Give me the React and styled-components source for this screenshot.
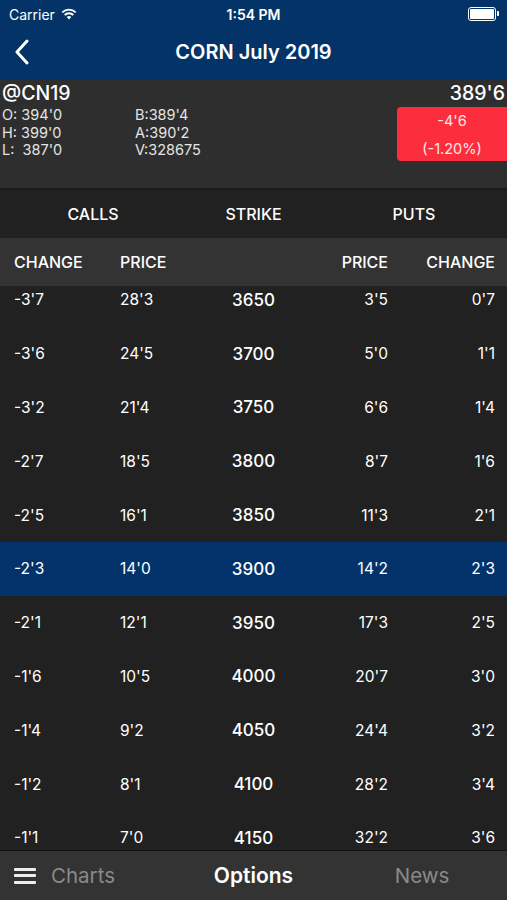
import styled, { createGlobalStyle } from 'styled-components';

const GlobalStyle = createGlobalStyle`
  html, body {
    margin: 0;
    padding: 0;
    background: #212121;
  }
  body {
    font-family: Inter, "Liberation Sans", sans-serif;
    color: #fff;
  }
`;

const rows = [
  ['-3\'7', '28\'3', '3650', '3\'5', '0\'7'],
  ['-3\'6', '24\'5', '3700', '5\'0', '1\'1'],
  ['-3\'2', '21\'4', '3750', '6\'6', '1\'4'],
  ['-2\'7', '18\'5', '3800', '8\'7', '1\'6'],
  ['-2\'5', '16\'1', '3850', '11\'3', '2\'1'],
  ['-2\'3', '14\'0', '3900', '14\'2', '2\'3'],
  ['-2\'1', '12\'1', '3950', '17\'3', '2\'5'],
  ['-1\'6', '10\'5', '4000', '20\'7', '3\'0'],
  ['-1\'4', '9\'2', '4050', '24\'4', '3\'2'],
  ['-1\'2', '8\'1', '4100', '28\'2', '3\'4'],
  ['-1\'1', '7\'0', '4150', '32\'2', '3\'6'],
];

const Page = styled.div`
  width: 507px;
  height: 900px;
  display: flex;
  flex-direction: column;
  overflow: hidden;
  background: #212121;
`;

const TopBar = styled.div`
  background: #043467;
  height: 80px;
  display: flex;
  flex-direction: column;
`;

const StatusBar = styled.div`
  height: 28px;
  display: grid;
  grid-template-columns: 1fr auto 1fr;
  align-items: center;
  padding: 0 9px;
  font-size: 14px;
`;

const Carrier = styled.div`
  display: flex;
  align-items: center;
  gap: 6px;
`;

const Clock = styled.div`
  font-weight: 600;
`;

const Battery = styled.div`
  justify-self: end;
  width: 24px;
  height: 10px;
  border: 1.5px solid #fff;
  border-radius: 3px;
  padding: 1px;
  margin-right: 2px;
  position: relative;
  &::before {
    content: '';
    display: block;
    height: 100%;
    background: #fff;
    border-radius: 1px;
  }
  &::after {
    content: '';
    position: absolute;
    right: -4px;
    top: 3px;
    width: 2px;
    height: 5px;
    background: #fff;
    border-radius: 0 1px 1px 0;
  }
`;

const NavBar = styled.div`
  flex: 1;
  display: grid;
  grid-template-columns: 60px 1fr 60px;
  align-items: center;
  padding-bottom: 4px;
`;

const BackButton = styled.div`
  padding-left: 14px;
  display: flex;
  align-items: center;
`;

const Title = styled.div`
  text-align: center;
  font-size: 20px;
  font-weight: 600;
`;

const Quote = styled.div`
  background: #2e2e2e;
  height: 110px;
  padding: 2px 2px 0 2px;
  box-sizing: border-box;
  border-bottom: 2px solid #1a1a1a;
  display: flex;
  justify-content: space-between;
`;

const QuoteLeft = styled.div`
  display: flex;
  flex-direction: column;
`;

const Symbol = styled.div`
  font-size: 19.5px;
  font-weight: 500;
  line-height: 22px;
`;

const Stats = styled.div`
  display: grid;
  grid-template-columns: 133px auto;
  font-size: 14.5px;
  line-height: 17.5px;
  color: #e4e4e4;
  margin-top: 2px;
`;

const QuoteRight = styled.div`
  display: flex;
  flex-direction: column;
  align-items: flex-end;
  margin-right: -2px;
`;

const Last = styled.div`
  font-size: 19.5px;
  font-weight: 500;
  line-height: 22px;
  padding-right: 2px;
`;

const ChangeBox = styled.div`
  margin-top: 3px;
  width: 110px;
  height: 54px;
  background: #fc2d3d;
  border-radius: 4px 0 0 4px;
  display: flex;
  flex-direction: column;
  align-items: center;
  justify-content: space-between;
  padding: 5px 0 4px;
  box-sizing: border-box;
  font-size: 14.5px;
  color: #ffe6e8;
`;

const GroupHeader = styled.div`
  height: 48px;
  background: #212121;
  display: grid;
  grid-template-columns: 186px 135px 186px;
  align-items: center;
  text-align: center;
  font-size: 16px;
  font-weight: 500;
`;

const ColumnHeader = styled.div`
  height: 48px;
  background: #333333;
`;

const Grid = styled.div`
  display: grid;
  grid-template-columns: 106px 66px 135px 67px 107px;
  align-items: center;
  height: 100%;
  padding: 0 12px 0 14px;
  font-size: ${(p) => (p.$head ? '16px' : '15.5px')};
  font-weight: ${(p) => (p.$head ? 500 : 400)};
`;

const Cell = styled.div`
  white-space: nowrap;
  text-align: ${(p) => p.$align || 'left'};
  font-size: ${(p) => (p.$strike ? '17px' : 'inherit')};
  font-weight: ${(p) => (p.$strike ? 500 : 'inherit')};
`;

const List = styled.div`
  flex: 1;
  overflow: hidden;
  background: #212121;
`;

const Rows = styled.div`
  margin-top: -13px;
`;

const Row = styled.div`
  height: 53.8px;
  background: ${(p) => (p.$active ? '#04336b' : '#212121')};
`;

const TabBar = styled.div`
  height: 49px;
  background: #333333;
  border-top: 1.5px solid #111;
  display: grid;
  grid-template-columns: 186px 135px 186px;
  align-items: center;
`;

const Tab = styled.div`
  display: flex;
  align-items: center;
  justify-content: ${(p) => p.$justify || 'center'};
  gap: 15px;
  padding-left: ${(p) => p.$pad || '0'};
  font-size: ${(p) => (p.$active ? '21px' : '20.5px')};
  font-weight: ${(p) => (p.$active ? 600 : 400)};
  color: ${(p) => (p.$active ? '#fff' : '#8a8a8a')};
`;

const Burger = styled.div`
  width: 22px;
  display: flex;
  flex-direction: column;
  gap: 3.5px;
  & > span {
    height: 3px;
    background: #eee;
    border-radius: 1px;
  }
`;

const Wifi = () => (
  <svg width="16" height="12" viewBox="0 0 16 12">
    <path d="M8 11.5 L10.3 9 A3.3 3.3 0 0 0 5.7 9 Z" fill="#fff" />
    <path d="M3.7 7 A6 6 0 0 1 12.3 7" stroke="#fff" strokeWidth="1.9" fill="none" />
    <path d="M1.3 4.4 A9.4 9.4 0 0 1 14.7 4.4" stroke="#fff" strokeWidth="1.9" fill="none" />
  </svg>
);

export default function App() {
  return (
    <Page>
      <GlobalStyle />
      <TopBar>
        <StatusBar>
          <Carrier>
            Carrier <Wifi />
          </Carrier>
          <Clock>1:54 PM</Clock>
          <Battery />
        </StatusBar>
        <NavBar>
          <BackButton>
            <svg width="16" height="26" viewBox="0 0 16 26">
              <path d="M13 2 L3 13 L13 24" stroke="#fff" strokeWidth="3" fill="none" strokeLinecap="round" strokeLinejoin="round" />
            </svg>
          </BackButton>
          <Title>CORN July 2019</Title>
          <div />
        </NavBar>
      </TopBar>

      <Quote>
        <QuoteLeft>
          <Symbol>@CN19</Symbol>
          <Stats>
            <span>O: 394'0</span>
            <span>B:389'4</span>
            <span>H: 399'0</span>
            <span>A:390'2</span>
            <span>L:&nbsp; 387'0</span>
            <span>V:328675</span>
          </Stats>
        </QuoteLeft>
        <QuoteRight>
          <Last>389'6</Last>
          <ChangeBox>
            <span>-4'6</span>
            <span>(-1.20%)</span>
          </ChangeBox>
        </QuoteRight>
      </Quote>

      <GroupHeader>
        <span>CALLS</span>
        <span>STRIKE</span>
        <span>PUTS</span>
      </GroupHeader>

      <ColumnHeader>
        <Grid $head>
          <Cell>CHANGE</Cell>
          <Cell>PRICE</Cell>
          <Cell />
          <Cell $align="right">PRICE</Cell>
          <Cell $align="right">CHANGE</Cell>
        </Grid>
      </ColumnHeader>

      <List>
        <Rows>
          {rows.map((r) => (
            <Row key={r[2]} $active={r[2] === '3900'}>
              <Grid>
                <Cell>{r[0]}</Cell>
                <Cell>{r[1]}</Cell>
                <Cell $align="center" $strike>{r[2]}</Cell>
                <Cell $align="right">{r[3]}</Cell>
                <Cell $align="right">{r[4]}</Cell>
              </Grid>
            </Row>
          ))}
        </Rows>
      </List>

      <TabBar>
        <Tab $justify="flex-start" $pad="14px">
          <Burger>
            <span />
            <span />
            <span />
          </Burger>
          Charts
        </Tab>
        <Tab $active>Options</Tab>
        <Tab $pad="16px">News</Tab>
      </TabBar>
    </Page>
  );
}
